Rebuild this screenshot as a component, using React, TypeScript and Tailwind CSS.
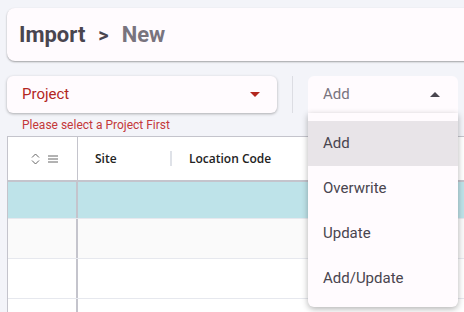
import React from 'react';

const rows = [
  { bg: 'bg-[#bee3e9]', h: 'h-[37px]' },
  { bg: 'bg-[#fafafa]', h: 'h-[40px]' },
  { bg: 'bg-white', h: 'h-[40px]' },
  { bg: 'bg-white', h: 'h-[40px]' },
];

const options = ['Add', 'Overwrite', 'Update', 'Add/Update'];

function CaretDown({ className }: { className?: string }) {
  return (
    <svg width="10" height="5" viewBox="0 0 10 5" className={className}>
      <path d="M0 0h10L5 5z" fill="currentColor" />
    </svg>
  );
}

function CaretUp({ className }: { className?: string }) {
  return (
    <svg width="10" height="5" viewBox="0 0 10 5" className={className}>
      <path d="M0 5h10L5 0z" fill="currentColor" />
    </svg>
  );
}

export default function App() {
  return (
    <div className="relative w-[464px] h-[312px] overflow-hidden bg-[#f3f4f9] font-['Roboto',sans-serif]">
      {/* page title */}
      <div className="mt-2 ml-[7px] mr-[-20px] h-[53px] rounded-lg bg-[#fffbfe] shadow-[0_1px_2px_rgba(0,0,0,0.35)] flex items-center pl-3">
        <span className="text-[22px] font-bold text-[#49454f]">Import</span>
        <span className="text-[20px] font-bold text-[#49454f] ml-[13px] mr-[13px]">&gt;</span>
        <span className="text-[22px] font-bold text-[#79747e]">New</span>
      </div>

      {/* selectors */}
      <div className="mt-[15px] flex items-center">
        <div className="ml-[7px] w-[270px] h-[37px] rounded-md bg-[#fffbfe] shadow-[0_1px_3px_rgba(0,0,0,0.3)] flex items-center justify-between pl-[15px] pr-[17px]">
          <span className="text-[15px] text-[#b3261e]">Project</span>
          <CaretDown className="text-[#b3261e]" />
        </div>
        <div className="ml-[15px] w-px h-[37px] bg-[#dcdde3]" />
        <div className="ml-[15px] w-[150px] h-[37px] rounded-t-md bg-[#fffbfe] flex items-center justify-between pl-[15px] pr-[18px]">
          <span className="text-[15px] text-[#79747e]">Add</span>
          <CaretUp className="text-[#49454f]" />
        </div>
      </div>
      <div className="mt-[5px] ml-[22px] text-[12px] leading-[14px] text-[#c4383a]">Please select a Project First</div>

      {/* grid */}
      <div className="mt-[4px] ml-[7px] mr-[-40px] border-l border-t border-[#c4c4cc] bg-white font-['Open_Sans',sans-serif]">
        <div className="flex h-[45px] border-b-2 border-[#c4c4cc]">
          <div className="w-[70px] border-r border-[#c4c4cc] flex items-center justify-center gap-[8px] pl-[3px]">
            <svg width="9" height="12" viewBox="0 0 9 12" className="text-[#666]">
              <path d="M1 4.5L4.5 1 8 4.5M1 7.5l3.5 3.5L8 7.5" fill="none" stroke="currentColor" strokeWidth="1" />
            </svg>
            <svg width="10" height="8" viewBox="0 0 10 8" className="text-[#666]">
              <path d="M0 1h10M0 4h10M0 7h10" stroke="currentColor" strokeWidth="1" />
            </svg>
          </div>
          <div className="flex items-center">
            <div className="w-[94px] pl-[17px] text-[12px] font-semibold text-[#222] flex items-center justify-between">
              Site
              <span className="w-[2px] h-[15px] bg-[#dfe2e8]" />
            </div>
            <div className="pl-[17px] text-[12px] font-semibold text-[#222]">Location Code</div>
          </div>
        </div>
        {rows.map((r, i) => (
          <div key={i} className={`flex ${r.h} ${r.bg} border-b border-[#e6e8ee]`}>
            <div className="w-[70px] border-r-2 border-[#c4c4cc]" />
            <div className="flex-1" />
          </div>
        ))}
      </div>

      {/* open menu */}
      <div className="absolute left-[308px] top-[113px] w-[150px] pt-2 pb-[6px] rounded-b-md bg-[#fffbfe] shadow-[0_2px_6px_rgba(0,0,0,0.3)]">
        {options.map((o, i) => (
          <div
            key={o}
            className={`h-[45px] flex items-center pl-[15px] text-[15px] text-[#49454f] ${i === 0 ? 'bg-[#e8e4e8]' : ''}`}
          >
            {o}
          </div>
        ))}
      </div>
    </div>
  );
}
